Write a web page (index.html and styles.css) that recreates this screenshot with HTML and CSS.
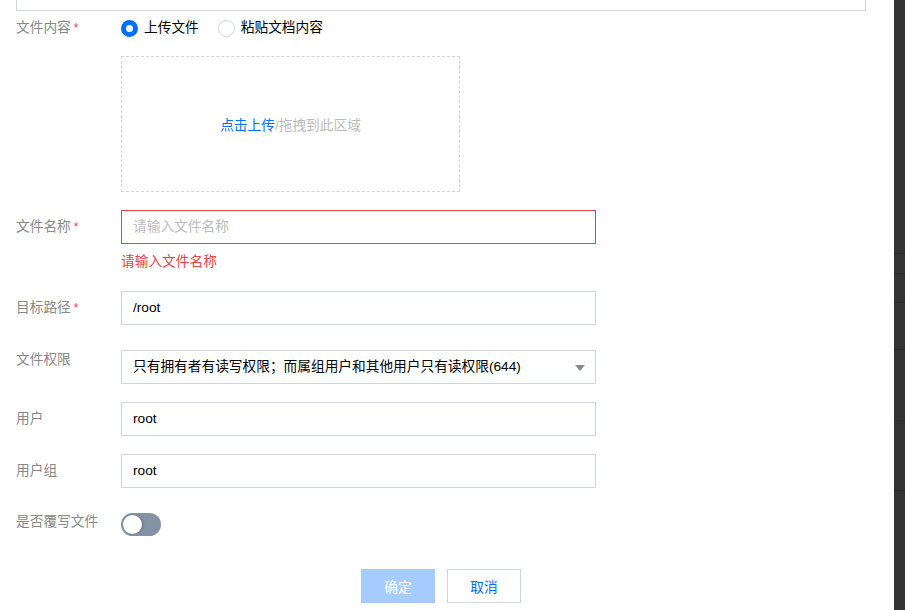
FILE: index.html
```html
<!DOCTYPE html>
<html lang="zh-CN">
<head>
<meta charset="utf-8">
<title>上传文件</title>
<link rel="stylesheet" href="styles.css">
</head>
<body>
<div class="page">
  <div class="drawer">
    <div class="prev-box"></div>
    <div class="form">
      <div class="row row-radio">
        <div class="label">文件内容<span class="req">*</span></div>
        <div class="control radios">
          <label class="radio checked"><span class="dot"></span>上传文件</label>
          <label class="radio"><span class="dot"></span>粘贴文档内容</label>
        </div>
      </div>
      <div class="row row-upload">
        <div class="label"></div>
        <div class="upload"><span class="link">点击上传</span><span class="hint">/拖拽到此区域</span></div>
      </div>
      <div class="row row-name">
        <div class="label label-input">文件名称<span class="req">*</span></div>
        <div class="control">
          <div class="input error"><span class="placeholder">请输入文件名称</span></div>
          <div class="err-msg">请输入文件名称</div>
        </div>
      </div>
      <div class="row row-path">
        <div class="label label-input">目标路径<span class="req">*</span></div>
        <div class="input">/root</div>
      </div>
      <div class="row row-perm">
        <div class="label label-top">文件权限</div>
        <div class="input select">只有拥有者有读写权限；而属组用户和其他用户只有读权限(644)<span class="arrow"></span></div>
      </div>
      <div class="row row-user">
        <div class="label label-input">用户</div>
        <div class="input">root</div>
      </div>
      <div class="row row-group">
        <div class="label label-input">用户组</div>
        <div class="input">root</div>
      </div>
      <div class="row row-switch">
        <div class="label label-top">是否覆写文件</div>
        <div class="switch"><span class="knob"></span></div>
      </div>
      <div class="footer">
        <button class="btn btn-primary" type="button">确定</button>
        <button class="btn btn-default" type="button">取消</button>
      </div>
    </div>
  </div>
  <div class="backdrop">
    <div class="bd-line l1"></div>
    <div class="bd-line l2"></div>
    <div class="bd-line l3"></div>
    <div class="bd-line l4"></div>
    <div class="bd-line l5"></div>
    <div class="bd-line l6"></div>
  </div>
</div>
</body>
</html>
```
FILE: styles.css
```css
* { box-sizing: border-box; }
html, body { margin: 0; padding: 0; }
body {
  font-family: "Liberation Sans", "Noto Sans CJK SC", sans-serif;
  font-size: 13.7px;
  color: #000;
  background: #333;
}
.page {
  display: flex;
  width: 905px;
  height: 610px;
  overflow: hidden;
}
.drawer {
  width: 894px;
  flex: none;
  background: #fff;
  padding: 0 16px;
}
.prev-box {
  width: 850px;
  height: 11px;
  border: 1px solid #cfd5de;
  border-top: none;
}
.form { width: 850px; }
.row {
  display: flex;
  align-items: flex-start;
}
.label {
  width: 105px;
  flex: none;
  color: #888;
  line-height: 20px;
  height: 20px;
}
.label-input { line-height: 34px; height: 34px; }
.req {
  color: #e54545;
  margin-left: 3px;
  font-size: 12px;
}
.row-radio { margin-top: 7px; height: 20px; }
.radios { display: flex; gap: 19px; line-height: 20px; height: 20px; }
.radio {
  display: flex;
  align-items: center;
  gap: 6px;
  color: #000;
  height: 20px;
}
.dot {
  width: 17px;
  height: 17px;
  border-radius: 50%;
  border: 1px solid #cfd5de;
  background: #fff;
}
.radio.checked .dot { border: 5px solid #006eff; }
.row-upload { margin-top: 18px; }
.upload {
  width: 339px;
  height: 136px;
  border: 1px dashed #cfd5de;
  display: flex;
  align-items: center;
  justify-content: center;
}
.link { color: #006eff; }
.hint { color: #bbb; }
.row-name { margin-top: 18px; }
.input {
  width: 475px;
  height: 34px;
  border: 1px solid #cfd5de;
  padding: 0 11px;
  line-height: 32px;
  color: #000;
  position: relative;
}
.input.error { border-color: #e54545; }
.placeholder { color: #bbb; }
.err-msg {
  color: #e54545;
  line-height: 20px;
  height: 20px;
  margin-top: 8px;
}
.row-path { margin-top: 19px; }
.row-perm { margin-top: 25px; }
.select .arrow {
  position: absolute;
  right: 10px;
  top: 14px;
  width: 0;
  height: 0;
  border-left: 5px solid transparent;
  border-right: 5px solid transparent;
  border-top: 6px solid #888;
}
.row-user, .row-group { margin-top: 18px; }
.row-switch { margin-top: 24px; }
.switch {
  width: 40px;
  height: 23px;
  border-radius: 12px;
  background: #8592a6;
  padding: 2px;
  margin-top: 1px;
}
.knob {
  display: block;
  width: 19px;
  height: 19px;
  border-radius: 50%;
  background: #fff;
  box-shadow: 1px 0 2px rgba(0,0,0,0.25);
}
.footer {
  margin-top: 33px;
  display: flex;
  justify-content: center;
  gap: 12px;
}
.btn {
  width: 74px;
  height: 34px;
  font-family: inherit;
  font-size: 13.7px;
  border: 1px solid #cfd5de;
  background: #fff;
  padding: 0;
}
.btn-primary {
  background: #a6cbfd;
  border-color: #a6cbfd;
  color: #fff;
}
.btn-default { color: #006eff; }
.backdrop {
  flex: 1;
  background: #333;
  position: relative;
}
.bd-line {
  position: absolute;
  left: 0;
  right: 0;
  height: 1px;
  background: #2b2b2b;
}
.l1 { top: 253px; }
.l2 { top: 273px; }
.l3 { top: 302px; }
.l4 { top: 349px; }
.l5 { top: 420px; }
.l6 { top: 490px; }
```
